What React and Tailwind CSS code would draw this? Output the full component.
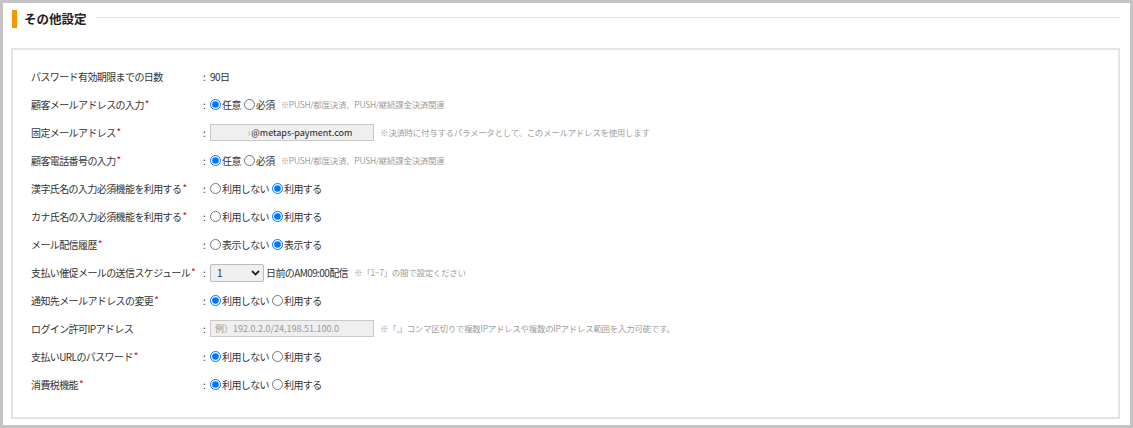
import React from "react";

const FONT = { fontFamily: '"Noto Sans CJK JP", "Noto Sans", sans-serif' };

function Req() {
    return <span className="text-[#e60012] text-[10px] ml-[1px] relative top-[-1px]">*</span>;
}

function Radios({ name, options, checked }) {
    return (
        <span className="flex items-center">
            {options.map((o, i) => (
                <label key={o} className={`flex items-center ${i > 0 ? "ml-[3px]" : ""}`}>
                    <input
                        type="radio"
                        name={name}
                        defaultChecked={i === checked}
                        className="m-0 mr-[1px] w-[11px] h-[11px]"
                    />
                    <span>{o}</span>
                </label>
            ))}
        </span>
    );
}

function Note({ children }) {
    return <span className="ml-[6px] text-[8.5px] tracking-[-0.3px] text-[#a0a0a0]">{children}</span>;
}

function Row({ label, req, children }) {
    return (
        <div className="flex items-center h-[28px]">
            <div className="w-[172px] shrink-0 text-[#333] whitespace-nowrap">
                {label}
                {req && <Req />}
            </div>
            <span className="w-[7px] shrink-0 text-[#333]">:</span>
            <div className="flex items-center text-[#333]">{children}</div>
        </div>
    );
}

export default function App() {
    const useOpts = ["利用しない", "利用する"];
    return (
        <div style={FONT} className="w-[1133px] h-[428px] bg-white border-[3px] border-[#c3c3c3] text-[10px] tracking-[-0.6px]">
            <div className="flex items-center pl-[9px] pr-[10px] pt-[7px]">
                <div className="w-[5px] h-[18px] bg-[#f39800]" />
                <h2 className="ml-[7px] text-[12.5px] font-bold text-[#222] tracking-[0px]">その他設定</h2>
                <div className="flex-1 ml-[9px] h-px bg-[#e3e3e3] mt-[-4px]" />
            </div>
            <div className="mt-[19px] ml-[8px] mr-[10px] border-2 border-[#e4e4e4] pt-[13px] pb-[18px] pl-[18px]">
                <Row label="パスワード有効期限までの日数">
                    <span>90日</span>
                </Row>
                <Row label="顧客メールアドレスの入力" req>
                    <Radios name="mail" options={["任意", "必須"]} checked={0} />
                    <Note>※PUSH/都度決済、PUSH/継続課金決済関連</Note>
                </Row>
                <Row label="固定メールアドレス" req>
                    <div className="w-[164px] h-[17px] bg-[#efefef] border border-[#c8c8c8] flex items-center pl-[37px] text-[9px] tracking-[0px] text-[#222] overflow-hidden whitespace-nowrap">
                        <span className="text-[#bbb] mr-[1px]">ı</span>@metaps-payment.com
                    </div>
                    <Note>※決済時に付与するパラメータとして、このメールアドレスを使用します</Note>
                </Row>
                <Row label="顧客電話番号の入力" req>
                    <Radios name="tel" options={["任意", "必須"]} checked={0} />
                    <Note>※PUSH/都度決済、PUSH/継続課金決済関連</Note>
                </Row>
                <Row label="漢字氏名の入力必須機能を利用する" req>
                    <Radios name="kanji" options={useOpts} checked={1} />
                </Row>
                <Row label="カナ氏名の入力必須機能を利用する" req>
                    <Radios name="kana" options={useOpts} checked={1} />
                </Row>
                <Row label="メール配信履歴" req>
                    <Radios name="hist" options={["表示しない", "表示する"]} checked={1} />
                </Row>
                <Row label="支払い催促メールの送信スケジュール" req>
                    <div className="w-[54px] h-[18px] bg-[#efefef] border border-[#bbb] rounded-[2px] flex items-center justify-between pl-[6px] pr-[3px] text-[10px]">
                        <span>1</span>
                        <svg width="9" height="6" viewBox="0 0 9 6">
                            <path d="M1 1l3.5 3.5L8 1" stroke="#222" strokeWidth="1.8" fill="none" />
                        </svg>
                    </div>
                    <span className="ml-[2px]">日前のAM09:00配信</span>
                    <Note>※「1~7」の間で設定ください</Note>
                </Row>
                <Row label="通知先メールアドレスの変更" req>
                    <Radios name="notify" options={useOpts} checked={0} />
                </Row>
                <Row label="ログイン許可IPアドレス">
                    <div className="w-[164px] h-[17px] bg-[#efefef] border border-[#c8c8c8] flex items-center pl-[4px] text-[9px] tracking-[0px] text-[#999] overflow-hidden whitespace-nowrap">
                        例）192.0.2.0/24,198.51.100.0
                    </div>
                    <Note>※「,」コンマ区切りで複数IPアドレスや複数のIPアドレス範囲を入力可能です。</Note>
                </Row>
                <Row label="支払いURLのパスワード" req>
                    <Radios name="urlpw" options={useOpts} checked={0} />
                </Row>
                <Row label="消費税機能" req>
                    <Radios name="tax" options={useOpts} checked={0} />
                </Row>
            </div>
        </div>
    );
}
